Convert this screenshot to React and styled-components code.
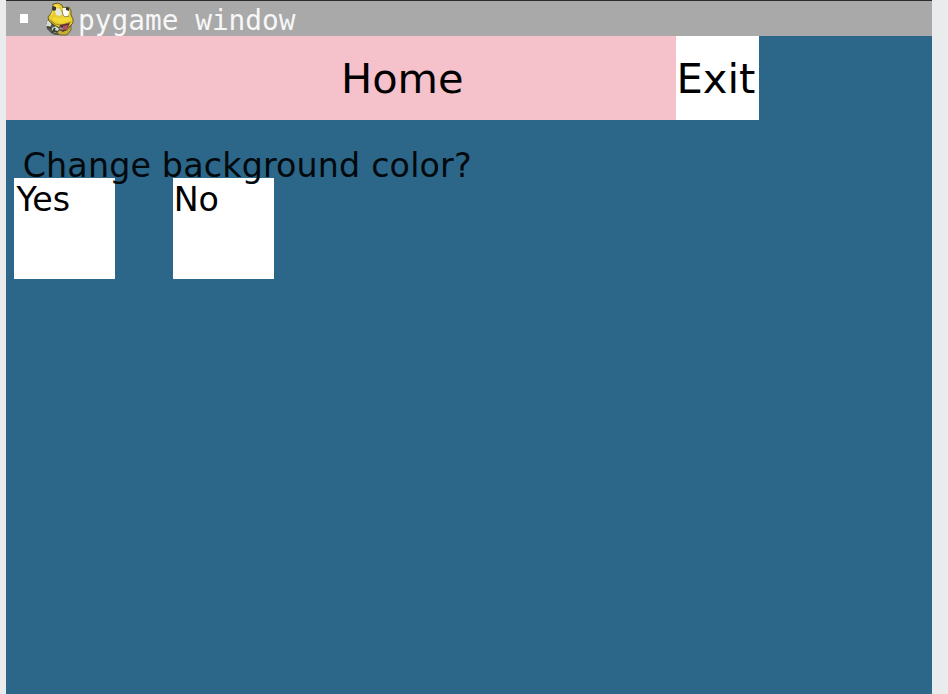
import React from 'react';
import styled, { createGlobalStyle } from 'styled-components';

const GlobalStyle = createGlobalStyle`
  * { box-sizing: border-box; }
  body { margin: 0; background: #eaebed; overflow: hidden; }
`;

const Window = styled.main`
  width: 926px;
  height: 694px;
  margin-left: 6px;
  background: #2c6688;
  color: #000;
  font-family: "DejaVu Sans", sans-serif;
  white-space: nowrap;
`;

const TitleBar = styled.header`
  display: flex;
  align-items: center;
  height: 36px;
  padding-left: 14px;
  border-top: 1px solid #2c2a2d;
  background: #a9a9a9;
`;

const WindowMark = styled.span`
  width: 8px;
  height: 9px;
  margin-bottom: 1px;
  background: #fff;
`;

const SnakeLogo = styled.svg`
  width: 30px;
  height: 34px;
  margin-left: 16px;
`;

const Title = styled.h1`
  margin: 5px 0 0 4px;
  color: #f7f7f7;
  font: 400 27.8px/34px "DejaVu Sans Mono", monospace;
`;

const Nav = styled.nav`
  display: flex;
  height: 84px;
`;

const NavButton = styled.button`
  width: ${({ $width }) => $width}px;
  height: 84px;
  padding: ${({ $inset }) => `1px 0 0 ${$inset}px`};
  border: 0;
  background: ${({ $color }) => $color};
  color: #000;
  font: 400 ${({ $size }) => $size}px/84px "DejaVu Sans", sans-serif;
  text-align: left;
`;

const Question = styled.p`
  position: relative;
  z-index: 1;
  height: 58.4px;
  margin: 0;
  padding: 26px 0 0 16.7px;
  color: #02090d;
  font-size: 33.3px;
  line-height: 40px;
  letter-spacing: 0.16px;
`;

const Choices = styled.div`
  display: flex;
  gap: 58.6px;
  margin-left: 8.4px;
`;

const Choice = styled.button`
  width: 100.4px;
  height: 100.4px;
  padding: 1.2px 0 0 ${({ $inset }) => $inset}px;
  display: flex;
  align-items: flex-start;
  border: 0;
  background: #fff;
  color: #000;
  font: 400 33.3px/40px "DejaVu Sans", sans-serif;
`;

function Snake() {
  return (
    <SnakeLogo viewBox="0 0 30 34" aria-hidden="true">
      <path d="m5 16-3 5 1 6 4 4 4 2h5l6-4-5-8Z" fill="#555850" />
      <path d="m3 19 3-1 2 4-2 3-4-1Zm5 7 4-2 3 3-2 4-5-1Z" fill="#d7ddd2" />
      <path d="m3 25 4 1m3 3 4 1M7 19l2 4m-1 8 3-5" fill="none" stroke="#3c4239" strokeWidth="2" />
      <path d="m15 28 4 1 4-1 4-5v5l-4 5h-7l-3-2Z" fill="#c5ad34" stroke="#51471f" strokeWidth=".7" />
      <path d="m9 2 5-1 4 2 1 3 6-1 2 4v4l2 4v4l-4 4-7 2-8-4-5-4-1-4 4-5Z" fill="#e6cb2f" stroke="#51471a" strokeWidth=".8" />
      <path d="m10 3 4 0 2 2-5 1-2 5-3 4 3-8Z" fill="#f6df52" />
      <path d="m13 6 3 1 2 5-2 2-4-1-1-4Z" fill="#e7e8e2" />
      <path d="m19 6 5 0 1 4-1 4-4 1-2-4Z" fill="#fff" />
      <path d="m9 4 3 1 0 3-3 1-1-2Zm13 1 3 1v3l-3-1Z" fill="#36342b" />
      <path d="m18 8 1 5 2 2 4-1" fill="none" stroke="#7b702e" strokeWidth=".8" />
      <path d="m9 15 7 1 9-1 3 3-4 2-8 1-8-3Z" fill="#f1d936" />
      <path d="m6 18 5 4 7 1 9-3" fill="none" stroke="#a78b22" strokeWidth="1.1" />
      <path d="m16 23 10-2-3 6-4 3-4-4Z" fill="#583036" />
      <path d="m19 24 5-1-1 4-4 1Z" fill="#bc5055" />
      <path d="m16 25 3 1 0 2-4-1Z" fill="#8d9294" />
    </SnakeLogo>
  );
}

export default function App() {
  return (
    <>
      <GlobalStyle />
      <Window>
        <TitleBar>
          <WindowMark />
          <Snake />
          <Title>pygame window</Title>
        </TitleBar>
        <Nav>
          <NavButton $width={669.6} $inset={335} $color="#f5c1ca" $size={41.5}>Home</NavButton>
          <NavButton $width={83.8} $inset={0.8} $color="#fff" $size={41.7}>Exit</NavButton>
        </Nav>
        <Question>Change background color?</Question>
        <Choices>
          <Choice $inset={2}>Yes</Choice>
          <Choice $inset={0.3}>No</Choice>
        </Choices>
      </Window>
    </>
  );
}
